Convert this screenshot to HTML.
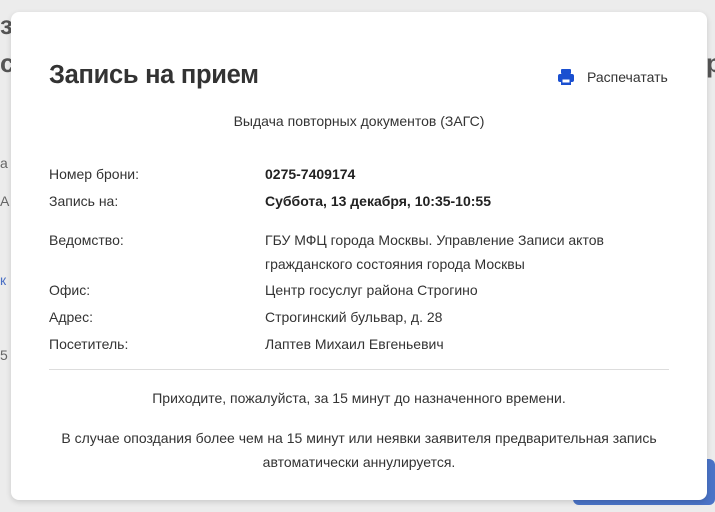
<!DOCTYPE html>
<html><head><meta charset="utf-8"><style>
*{margin:0;padding:0;box-sizing:border-box}
body{width:715px;height:512px;overflow:hidden;background:#ececec;font-family:"Liberation Sans",sans-serif;color:#333;position:relative}
.bg{position:absolute;color:#666;font-size:14px}
.modal{position:absolute;left:11px;top:12px;width:696px;height:488px;background:#fff;border-radius:8px;box-shadow:0 2px 6px rgba(0,0,0,.15)}
h1{position:absolute;left:38px;top:49px;font-size:25.5px;font-weight:bold;color:#333;letter-spacing:-0.3px}
.print{position:absolute;left:546px;top:56px;font-size:14px;color:#333;display:flex;align-items:center}
.print svg{margin-right:12px}
.sub{position:absolute;left:0;width:100%;top:101px;text-align:center;font-size:14px}
.row{position:absolute;left:38px;font-size:14px;line-height:24px}
.row .l{position:absolute;left:0;width:200px}
.row .v{position:absolute;left:216px;width:420px}
b{font-weight:bold;color:#222}
hr{position:absolute;left:38px;top:357px;width:620px;border:0;border-top:1px solid #ddd}
.c{position:absolute;left:0;width:100%;text-align:center;font-size:14px;line-height:24px}
</style></head><body>
<div class="bg" style="left:0;top:10px;font-size:26px;font-weight:bold;color:#555">з</div>
<div class="bg" style="left:0;top:48px;font-size:26px;font-weight:bold;color:#555">с</div>
<div class="bg" style="left:706px;top:48px;font-size:26px;font-weight:bold;color:#555">р</div>
<div class="bg" style="left:0;top:155px">а</div>
<div class="bg" style="left:0;top:193px">А</div>
<div class="bg" style="left:0;top:272px;color:#4a6fc4">к</div>
<div class="bg" style="left:0;top:347px">5</div>
<div style="position:absolute;left:573px;top:459px;width:142px;height:46px;background:#4a73c7;border-radius:6px"></div>
<div class="modal">
<h1>Запись на прием</h1>
<div class="print"><svg width="18" height="18" viewBox="0 0 18 18"><rect x="4" y="1" width="10" height="5" rx="1" fill="#1a4fd0"/><rect x="1" y="6" width="16" height="8" rx="2" fill="#1a4fd0"/><rect x="4" y="11" width="10" height="6" fill="#1a4fd0"/><rect x="5.5" y="11.5" width="7" height="3" fill="#fff"/></svg>Распечатать</div>
<div class="sub">Выдача повторных документов (ЗАГС)</div>
<div class="row" style="top:150px"><span class="l">Номер брони:</span><span class="v"><b>0275-7409174</b></span></div>
<div class="row" style="top:177px"><span class="l">Запись на:</span><span class="v"><b>Суббота, 13 декабря, 10:35-10:55</b></span></div>
<div class="row" style="top:216px"><span class="l">Ведомство:</span><span class="v">ГБУ МФЦ города Москвы. Управление Записи актов гражданского состояния города Москвы</span></div>
<div class="row" style="top:266px"><span class="l">Офис:</span><span class="v">Центр госуслуг района Строгино</span></div>
<div class="row" style="top:293px"><span class="l">Адрес:</span><span class="v">Строгинский бульвар, д. 28</span></div>
<div class="row" style="top:320px"><span class="l">Посетитель:</span><span class="v">Лаптев Михаил Евгеньевич</span></div>
<hr>
<div class="c" style="top:374px">Приходите, пожалуйста, за 15 минут до назначенного времени.</div>
<div class="c" style="top:414px">В случае опоздания более чем на 15 минут или неявки заявителя предварительная запись<br>автоматически аннулируется.</div>
</div>
</body></html>
